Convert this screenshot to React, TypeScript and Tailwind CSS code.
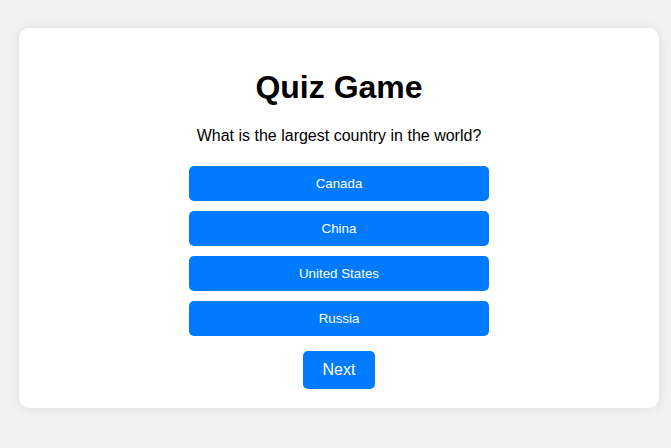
const options = ["Canada", "China", "United States", "Russia"];

export default function App() {
  return (
    <div
      className="min-h-screen bg-[#f2f2f2] pt-[28px] pl-[19px]"
      style={{ fontFamily: '"Liberation Sans", Arial, sans-serif' }}
    >
      <div className="w-[640px] h-[380px] bg-white rounded-[10px] shadow-[0_0_10px_rgba(0,0,0,0.1)] flex flex-col items-center pt-[41px]">
        <h1 className="text-[32px] leading-[37px] font-bold text-black">Quiz Game</h1>
        <p className="mt-[21px] text-[16px] leading-[18px] text-black">
          What is the largest country in the world?
        </p>
        <div className="mt-[21px] flex flex-col gap-[10px]">
          {options.map((o) => (
            <button
              key={o}
              className="w-[300px] h-[35px] rounded-[5px] bg-[#007bff] text-white text-[13.33px]"
            >
              {o}
            </button>
          ))}
        </div>
        <button className="mt-[15px] w-[72px] h-[38px] rounded-[5px] bg-[#007bff] text-white text-[16px]">
          Next
        </button>
      </div>
    </div>
  );
}
